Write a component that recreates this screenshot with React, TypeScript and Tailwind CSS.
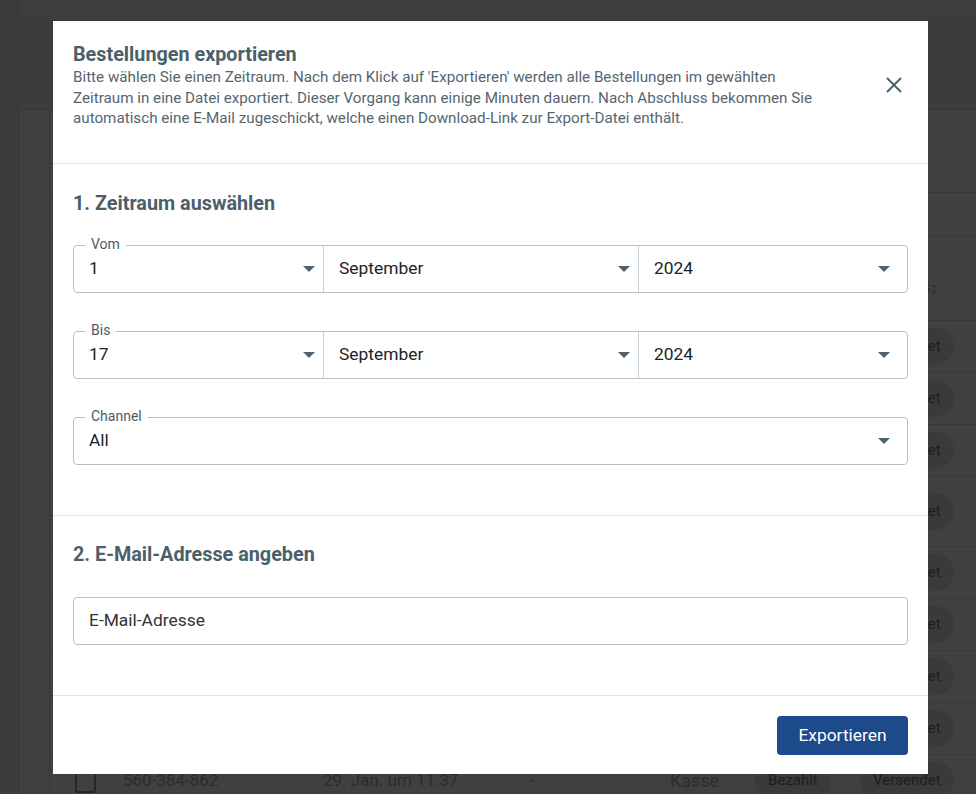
import React from 'react';

const orders = [
  { id: '560-384-871', date: '30. Jan. um 09:12', channel: 'Online', pay: 'Bezahlt', ship: 'Versendet' },
  { id: '560-384-870', date: '30. Jan. um 08:47', channel: 'Online', pay: 'Bezahlt', ship: 'Versendet' },
  { id: '560-384-869', date: '29. Jan. um 17:05', channel: 'Kasse', pay: 'Bezahlt', ship: 'Versendet' },
  { id: '560-384-868', date: '29. Jan. um 16:22', channel: 'Online', pay: 'Bezahlt', ship: 'Versendet', tall: true },
  { id: '560-384-867', date: '29. Jan. um 15:40', channel: 'Kasse', pay: 'Bezahlt', ship: 'Versendet' },
  { id: '560-384-866', date: '29. Jan. um 14:18', channel: 'Online', pay: 'Bezahlt', ship: 'Versendet' },
  { id: '560-384-865', date: '29. Jan. um 13:02', channel: 'Kasse', pay: 'Bezahlt', ship: 'Versendet' },
  { id: '560-384-864', date: '29. Jan. um 12:31', channel: 'Online', pay: 'Bezahlt', ship: 'Versendet' },
  { id: '560-384-862', date: '29. Jan. um 11:37', channel: 'Kasse', pay: 'Bezahlt', ship: 'Versendet' },
];

const Caret = () => (
  <svg width="12" height="6" viewBox="0 0 12 6" className="shrink-0">
    <path d="M0 0h12L6 6z" fill="#4f636e" />
  </svg>
);

const SelectCell: React.FC<{ value: string; className: string; caretClass: string }> = ({ value, className, caretClass }) => (
  <div className={`flex h-full items-center justify-between pl-[15px] ${className}`}>
    <span className="text-[17.4px] text-[#222]">{value}</span>
    <span className={caretClass}>
      <Caret />
    </span>
  </div>
);

const DateRow: React.FC<{ label: string; day: string; month: string; year: string }> = ({ label, day, month, year }) => (
  <div className="relative flex h-[48px] rounded-[4px] border border-[#b4bfc6]">
    <span className="absolute -top-[10px] left-[11px] bg-white px-[6px] text-[14px] leading-[16px] text-[#4d5a62]">{label}</span>
    <SelectCell value={day} className="w-[249px]" caretClass="pr-[8px]" />
    <SelectCell value={month} className="w-[315px] border-l border-[#c9d1d6]" caretClass="pr-[8px]" />
    <SelectCell value={year} className="flex-1 border-l border-[#c9d1d6]" caretClass="pr-[17px]" />
  </div>
);

const Background = () => (
  <div className="flex h-full">
    <div className="w-[20px] shrink-0 border-r border-[#363838] bg-[#3a3c3c]" />
    <div className="flex min-w-0 flex-1 flex-col">
      <div className="h-[21px] shrink-0 border-b border-[#383838] bg-[#3d3d3d]" />
      <div className="h-[89px] shrink-0 border-b border-[#383838] bg-[#3c3c3c]" />
      <div className="ml-[29px] flex flex-1 flex-col border-l border-[#383838] pt-[61px]">
        <div className="h-[22px] border-b border-[#383838]" />
        <div className="h-[44px] border-b border-[#383838]" />
        <div className="grid h-[84px] grid-cols-[73px_200px_205px_142px_85px_105px_1fr] items-center border-b border-[#383838] pt-[20px] text-[15px] font-medium text-[#262626]">
          <span />
          <span>Bestellung</span>
          <span>Datum</span>
          <span>Kunde</span>
          <span>Kanal</span>
          <span>Zahlung</span>
          <span className="-ml-[10px] flex items-center gap-1">
            Versendet
            <span className="text-[14px]">≡↕</span>
          </span>
        </div>
        {orders.map((o) => (
          <div
            key={o.id}
            className={`grid grid-cols-[73px_200px_205px_142px_85px_105px_1fr] items-center border-b border-[#383838] ${o.tall ? 'h-[70px]' : 'h-[52px]'}`}
          >
            <span className="ml-[25px] h-[24px] w-[21px] rounded-[3px] border-2 border-[#262626]" />
            <span className="text-[17px] text-[#2c2c2c]">{o.id}</span>
            <span className="text-[17px] text-[#2c2c2c]">{o.date}</span>
            <span className="pl-[2px] text-[17px] text-[#2c2c2c]">-</span>
            <span className="text-[18px] text-[#2c2c2c]">{o.channel}</span>
            <span className="w-fit rounded-full bg-[#3a3a3a] px-[13px] py-[7px] text-[15px] text-[#1e1e1e]">{o.pay}</span>
            <span className="w-fit rounded-full bg-[#3a3a3a] px-[13px] py-[7px] text-[15px] text-[#1e1e1e]">{o.ship}</span>
          </div>
        ))}
      </div>
    </div>
  </div>
);

export default function App() {
  return (
    <div className="relative h-[794px] w-full overflow-hidden bg-[#404040] font-['Roboto',sans-serif]">
      <Background />

      <div className="absolute left-[53px] top-[21px] flex h-[753px] w-[875px] flex-col bg-white">
        <div className="flex items-center justify-between border-b border-[#e0e0e0] pb-[34px] pl-[20px] pr-[26px] pt-[21px]">
          <div className="max-w-[745px]">
            <h2 className="text-[19.8px] font-bold leading-[25px] text-[#4b5f6b]">Bestellungen exportieren</h2>
            <p className="text-[15.2px] leading-[20.5px] text-[#55656f]">
              Bitte wählen Sie einen Zeitraum. Nach dem Klick auf 'Exportieren' werden alle Bestellungen im gewählten
              Zeitraum in eine Datei exportiert. Dieser Vorgang kann einige Minuten dauern. Nach Abschluss bekommen Sie
              automatisch eine E-Mail zugeschickt, welche einen Download-Link zur Export-Datei enthält.
            </p>
          </div>
          <svg width="16" height="16" viewBox="0 0 16 16" className="shrink-0">
            <path d="M1 1l14 14M15 1L1 15" stroke="#4f636e" strokeWidth="2" />
          </svg>
        </div>

        <div className="border-b border-[#e0e0e0] px-[20px] pb-[50px] pt-[28px]">
          <h3 className="text-[19.8px] font-bold leading-[24px] text-[#4b5f6b]">1. Zeitraum auswählen</h3>
          <div className="mt-[29px] flex flex-col gap-[38px]">
            <DateRow label="Vom" day="1" month="September" year="2024" />
            <DateRow label="Bis" day="17" month="September" year="2024" />
            <div className="relative flex h-[48px] items-center justify-between rounded-[4px] border border-[#b4bfc6] pl-[15px] pr-[17px]">
              <span className="absolute -top-[10px] left-[11px] bg-white px-[6px] text-[14px] leading-[16px] text-[#4d5a62]">Channel</span>
              <span className="text-[17.4px] text-[#222]">All</span>
              <Caret />
            </div>
          </div>
        </div>

        <div className="border-b border-[#e0e0e0] px-[20px] pb-[50px] pt-[27px]">
          <h3 className="text-[19.8px] font-bold leading-[24px] text-[#4b5f6b]">2. E-Mail-Adresse angeben</h3>
          <div className="mt-[30px] flex h-[48px] items-center rounded-[4px] border border-[#b4bfc6] pl-[15px]">
            <span className="text-[17.4px] text-[#333]">E-Mail-Adresse</span>
          </div>
        </div>

        <div className="flex flex-1 items-start justify-end px-[20px] pt-[20px]">
          <button className="h-[39px] w-[131px] rounded-[4px] bg-[#1c4a8b] text-[17.4px] text-white">Exportieren</button>
        </div>
      </div>
    </div>
  );
}
